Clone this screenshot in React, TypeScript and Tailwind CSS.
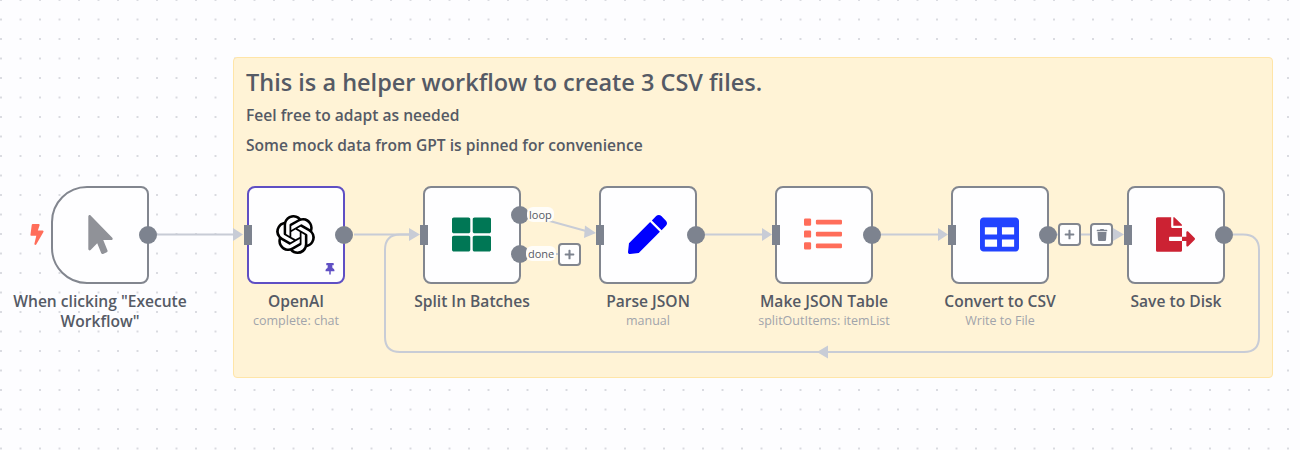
import type { ReactNode } from "react";
import { FaBolt, FaFileExport, FaList, FaMousePointer, FaPen, FaPlus, FaTable, FaThLarge, FaThumbtack, FaTrash } from "react-icons/fa";
import { SiOpenai } from "react-icons/si";

type NodeProps = {
  x: number;
  label: ReactNode;
  sub?: string;
  icon: ReactNode;
  trigger?: boolean;
  pinned?: boolean;
  extraOutputs?: boolean;
};

function WorkflowNode({ x, label, sub, icon, trigger, pinned, extraOutputs }: NodeProps) {
  return (
    <div className="absolute top-[186px] w-[98px]" style={{ left: x }}>
      <div
        className={`relative flex h-[98px] w-[98px] items-center justify-center border-2 bg-[#fefeff] pb-[2px] ${
          trigger ? "rounded-l-[36px] rounded-r-[8px]" : "rounded-[8px] pr-[2px]"
        } ${pinned ? "border-[#5f4fc4]" : "border-[#82868f]"}`}
      >
        {icon}
        {pinned && <FaThumbtack className="absolute right-[7px] bottom-[7px] h-[12px] w-[12px] text-[#5f4fc4]" />}
        {!trigger && <span className="absolute top-[37px] -left-[5px] h-[20px] w-[8px] bg-[#7d838f]" />}
        {extraOutputs ? (
          <>
            <span className="absolute top-[18px] -right-[10px] h-[18px] w-[18px] rounded-full bg-[#7d838f]" />
            <span className="absolute top-[57px] -right-[10px] h-[18px] w-[18px] rounded-full bg-[#7d838f]" />
          </>
        ) : (
          <span className="absolute top-[37.5px] -right-[10px] h-[18px] w-[18px] rounded-full bg-[#7d838f]" />
        )}
      </div>
      <div className="absolute top-[105px] left-1/2 w-[190px] -translate-x-1/2 text-center">
        <div className="text-[15.6px] leading-[20px] font-semibold text-[#555a65]">{label}</div>
        {sub && <div className="mt-[1px] text-[12.5px] leading-[17px] text-[#a1a4ab]">{sub}</div>}
      </div>
    </div>
  );
}

function ActionButton({ x, y, children }: { x: number; y: number; children: ReactNode }) {
  return (
    <div
      className="absolute flex h-[23px] w-[23px] items-center justify-center rounded-[4px] border-2 border-[#82868f] bg-[#fefeff] text-[#7d838f]"
      style={{ left: x, top: y }}
    >
      {children}
    </div>
  );
}

function EdgeLabel({ x, y, text }: { x: number; y: number; text: string }) {
  return (
    <span
      className="absolute rounded-[6px] bg-[#fffdf9] px-[2px] text-[11px] leading-[15px] text-[#555a65]"
      style={{ left: x, top: y }}
    >
      {text}
    </span>
  );
}

const edgeColor = "#c8ccd6";

function Edges() {
  return (
    <svg className="absolute inset-0" width="1300" height="450" fill="none">
      <g stroke={edgeColor} strokeWidth="2">
        <path d="M157 234.5H234" />
        <path d="M354 234.5H410" />
        <path d="M528 215L586 231" />
        <path d="M540 254H558" />
        <path d="M705 234.5H762" />
        <path d="M881 234.5H938" />
        <path d="M1049 234.5H1116" />
        <path d="M1233 234.5H1243Q1259 234.5 1259 250V337Q1259 352 1244 352H400Q385 352 385 337V250Q385 234.5 400 234.5H410" />
      </g>
      <g fill={edgeColor}>
        <path d="M233 228L243 234.5L233 241Z" />
        <path d="M409 228L420 234.5L409 241Z" />
        <path d="M585 225.5L596 233L584 238Z" />
        <path d="M762 228L772 234.5L762 241Z" />
        <path d="M938 228L948 234.5L938 241Z" />
        <path d="M1113 228L1124 234.5L1113 241Z" />
        <path d="M828 345.5L817 352L828 358.5Z" />
      </g>
    </svg>
  );
}

export default function App() {
  return (
    <div
      className="relative h-[450px] w-[1300px] overflow-hidden bg-[#fdfdff] bg-[radial-gradient(circle,#d9dae0_1px,transparent_1.2px)] bg-[size:19.5px_19.5px] bg-[position:-8.75px_-9.75px] font-['Open_Sans',sans-serif]"
    >
      {/* sticky note */}
      <div className="absolute top-[57px] left-[233px] flex h-[321px] w-[1040px] flex-col rounded-[4px] border border-[#ffe5a8] bg-[#fff3d6] px-3 pt-[7px] text-[#555a65]">
        <h1 className="text-[23.5px] leading-[34px] font-semibold">This is a helper workflow to create 3 CSV files.</h1>
        <p className="mt-[5px] text-[15.6px] leading-[22px] font-semibold">Feel free to adapt as needed</p>
        <p className="mt-[8px] text-[15.6px] leading-[22px] font-semibold">Some mock data from GPT is pinned for convenience</p>
      </div>

      <Edges />

      <FaBolt className="absolute top-[224px] left-[29px] h-[21px] w-[16px] text-[#ff6d5a]" />

      <WorkflowNode
        x={51}
        trigger
        label={<>When clicking "Execute<br />Workflow"</>}
        icon={<FaMousePointer className="h-[39px] w-[39px] text-[#909298]" />}
      />
      <WorkflowNode
        x={247}
        pinned
        label="OpenAI"
        sub="complete: chat"
        icon={<SiOpenai className="h-[39px] w-[39px] text-black" />}
      />
      <WorkflowNode
        x={423}
        extraOutputs
        label="Split In Batches"
        icon={<FaThLarge className="h-[39px] w-[39px] text-[#007755]" />}
      />
      <WorkflowNode
        x={599}
        label="Parse JSON"
        sub="manual"
        icon={<FaPen className="h-[39px] w-[39px] text-[#0000ff]" />}
      />
      <WorkflowNode
        x={775}
        label="Make JSON Table"
        sub="splitOutItems: itemList"
        icon={<FaList className="h-[38px] w-[38px] text-[#ff6d5a]" />}
      />
      <WorkflowNode
        x={951}
        label="Convert to CSV"
        sub="Write to File"
        icon={<FaTable className="h-[39px] w-[39px] text-[#2244ff]" />}
      />
      <WorkflowNode
        x={1127}
        label="Save to Disk"
        icon={<FaFileExport className="h-[39px] w-[39px] text-[#cc2233]" />}
      />

      <EdgeLabel x={527} y={207} text="loop" />
      <EdgeLabel x={526} y={246} text="done" />

      <ActionButton x={558} y={243}><FaPlus className="h-[11px] w-[11px]" /></ActionButton>
      <ActionButton x={1058} y={223}><FaPlus className="h-[11px] w-[11px]" /></ActionButton>
      <ActionButton x={1090} y={223}><FaTrash className="h-[12px] w-[12px]" /></ActionButton>
    </div>
  );
}
